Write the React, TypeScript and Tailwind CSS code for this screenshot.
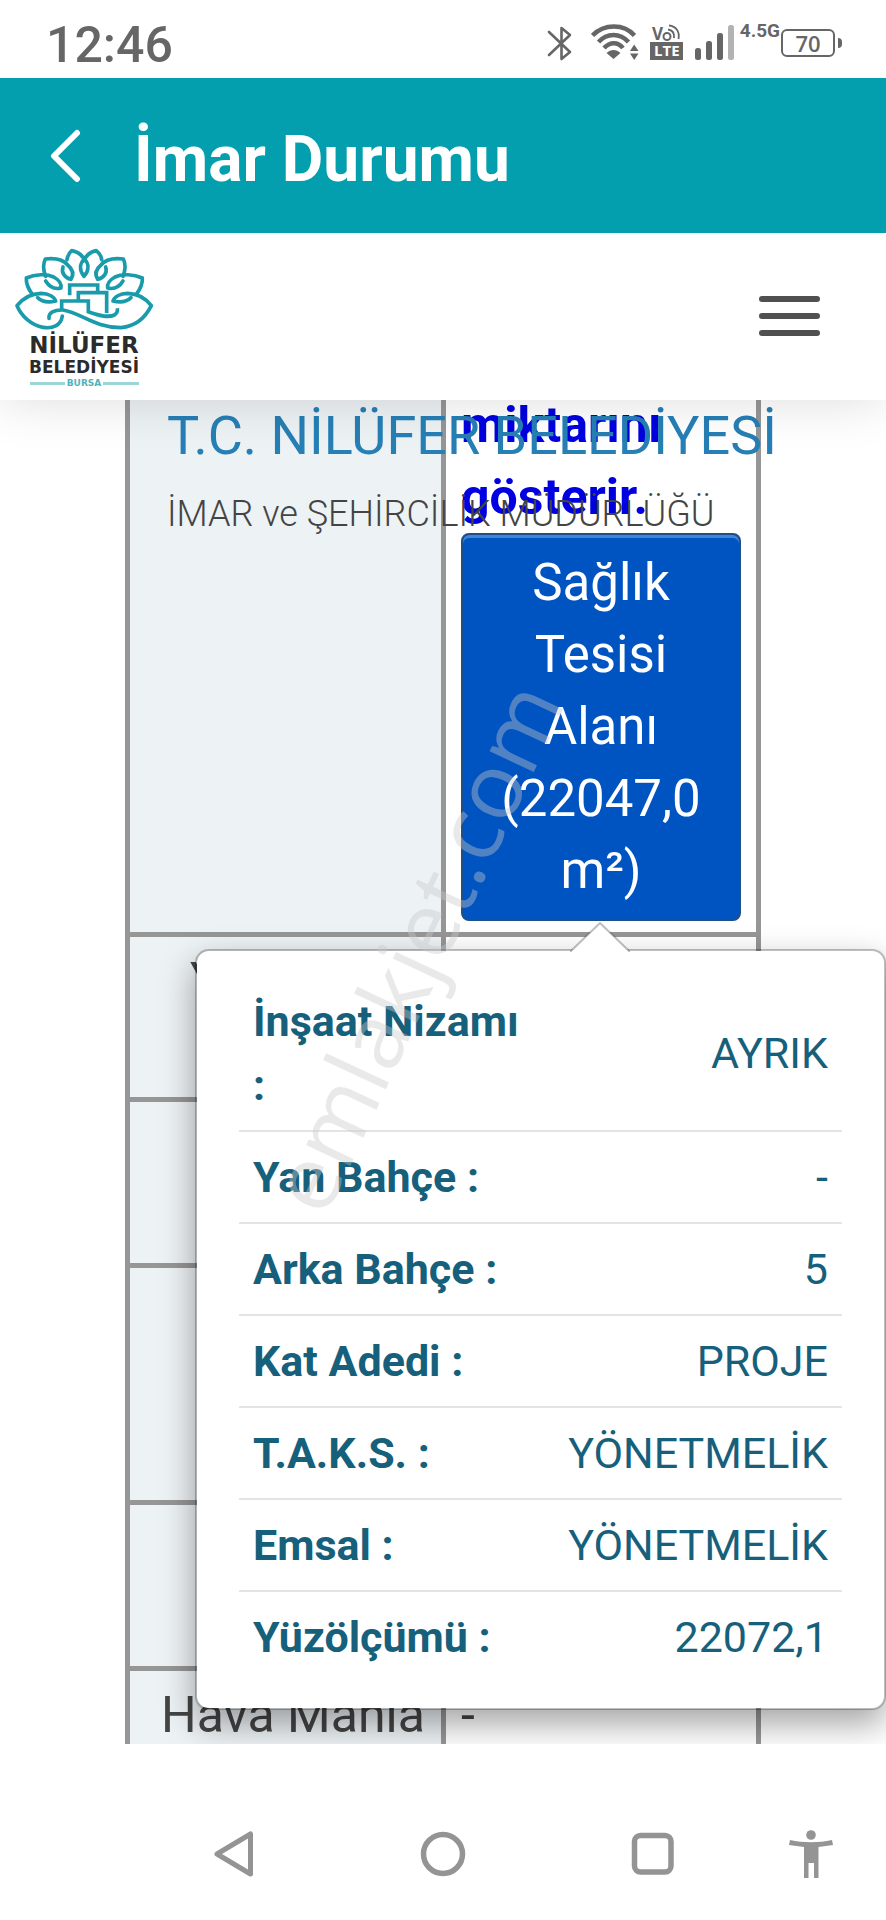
const details = [
  { label: 'İnşaat Nizamı :', value: 'AYRIK' },
  { label: 'Yan Bahçe :', value: '-' },
  { label: 'Arka Bahçe :', value: '5' },
  { label: 'Kat Adedi :', value: 'PROJE' },
  { label: 'T.A.K.S. :', value: 'YÖNETMELİK' },
  { label: 'Emsal :', value: 'YÖNETMELİK' },
  { label: 'Yüzölçümü :', value: '22072,1' },
];

function StatusBar() {
  return (
    <div className="flex h-[78px] shrink-0 items-start justify-between bg-white pl-[46px] pr-[44px] text-[#666]">
      <time className="pt-[15px] text-[50px] leading-[60px] font-medium">12:46</time>
      <div className="flex items-start pt-[20px]">
        <svg className="mt-[5px] h-9 w-[26px]" viewBox="0 0 26 36" fill="none" stroke="currentColor" strokeWidth="2.6" strokeLinejoin="round" strokeLinecap="round" aria-label="Bluetooth">
          <path d="M2 7L23 27L14.500 34V3L23 10L2 30" />
        </svg>
        <svg className="mt-[4px] ml-[18px] h-9 w-[48px]" viewBox="0 0 48 36" fill="none" stroke="currentColor" strokeWidth="4.5" aria-label="Wi-Fi">
          <path d="M1.500 11.500C13-0.500 33-0.500 43.500 11.500M7.500 18C16 8.500 29 8.500 37.500 18M13 24C19 17.500 27 17.500 32 24" />
          <path d="M15.500 29C20 25 25 25 29.500 29L22.500 35Z" fill="currentColor" stroke="none" />
          <path d="M39 27H47.500L43.200 20.500ZM39 29.500H47.500L43.200 36Z" fill="currentColor" stroke="none" />
        </svg>
        <svg className="mt-[4px] ml-[11px] h-[36px] w-[34px] overflow-visible" viewBox="0 0 34 36" aria-label="VoLTE">
          <text x="2" y="16" className="fill-[#666] font-['Open_Sans'] text-[17px] font-bold">V</text>
          <circle cx="17" cy="12.500" r="3.500" fill="none" stroke="#666" strokeWidth="2" />
          <path d="M18 5.500C22 6 24.500 9 24 14M19 1.500C26 2 30 8 28.500 15" fill="none" stroke="#666" strokeWidth="1.800" />
          <rect y="18" width="33" height="18" fill="#666" />
          <text x="4" y="32" className="fill-white font-['Open_Sans'] text-[15px] font-bold">LTE</text>
        </svg>
        <svg className="mt-[4px] ml-[11px] h-9 w-[40px]" viewBox="0 0 40 36" aria-label="Sinyal">
          <rect x="0" y="24" width="6" height="12" rx="2.500" fill="#666" />
          <rect x="11" y="17" width="6" height="19" rx="2.500" fill="#666" />
          <rect x="22" y="9" width="6" height="27" rx="2.500" fill="#666" />
          <rect x="33" y="1" width="6" height="35" rx="2.500" fill="#b3b3b3" />
        </svg>
        <span className="ml-[5px] text-[19px] leading-[22px] font-bold">4.5G</span>
        <div className="mt-[9px] ml-[1px] flex h-[28px] w-[54px] items-center justify-center rounded-[6px] border-[2px] border-[#666] font-['Open_Sans'] text-[22px] leading-6 font-semibold">
          70
        </div>
        <span className="mt-[18px] ml-[3px] h-[10px] w-[4px] rounded-r-full bg-[#666]" />
      </div>
    </div>
  );
}

function Logo() {
  return (
    <a href="#" className="flex w-[140px] flex-col items-center font-['DejaVu_Sans'] font-bold text-[#2b2b2b]">
      <svg className="h-[84px] w-[140px]" viewBox="43 50 420 252" fill="none" stroke="#1a9bab" strokeWidth="11" strokeLinejoin="round" strokeLinecap="round">
        <path d="M253 138C238 120 240 100 254 86C268 100 269 120 253 138Z" />
        <path d="M202 88C204 76 208 68 216 61C232 64 246 73 254 86C262 73 276 64 290 61C300 68 304 76 306 88" />
        <path d="M138 138C130 118 130 100 137 86C164 83 190 86 204 104C221 118 222 134 214 147C196 143 184 128 190 110" />
        <path d="M370 138C378 118 378 100 371 86C344 83 318 86 304 104C287 118 286 134 294 147C312 143 324 128 318 110" />
        <path d="M98 192C86 176 79 160 80 143C106 131 142 130 162 140C180 150 186 162 184 173C164 178 148 168 138 152" />
        <path d="M410 192C422 176 429 160 428 143C402 131 366 130 346 140C328 150 322 162 324 173C344 178 360 168 370 152" />
        <path d="M188 257C184 286 158 296 130 291C94 284 66 258 52 226C70 203 94 190 124 189C148 190 164 200 168 212C144 218 124 212 114 202" />
        <path d="M148 264C146 246 164 238 190 239C246 248 284 292 364 292C408 288 438 260 455 226C438 203 414 190 384 189C360 190 344 200 340 212C364 218 384 212 394 202" />
        <g strokeLinejoin="miter" strokeLinecap="butt">
          <path d="M210 195V164H294V183M236 210V187H321V248" />
          <path d="M186 236V212H266V244C294 254 324 264 344 254C352 250 354 242 353 234" />
        </g>
      </svg>
      <span className="mt-[1px] text-[23px] leading-[26px]">NİLÜFER</span>
      <span className="text-[17px] leading-[18px]">BELEDİYESİ</span>
      <span className="flex w-[109px] items-center gap-[2px] text-[9px] leading-[14px] text-[#4fb3bd]">
        <span className="h-[3px] flex-1 bg-[#9dd5d6]" />
        BURSA
        <span className="h-[3px] flex-1 bg-[#9dd5d6]" />
      </span>
    </a>
  );
}

function DetailsPopover() {
  return (
    <div role="dialog" aria-label="Yapılaşma bilgileri" className="absolute top-[549px] right-0 left-[195px] rounded-[14px] border-2 border-black/25 bg-white bg-clip-padding pt-[25px] pr-[42px] pb-[26px] pl-[42px] shadow-[0_14px_34px_rgba(0,0,0,0.36)]">
      <svg className="absolute top-[-29px] left-[373px] h-[30px] w-[60px]" viewBox="0 0 60 30">
        <path d="M0 30L30 1L60 30Z" fill="white" />
        <path d="M0 30L30 1L60 30" fill="none" stroke="black" strokeOpacity="0.25" strokeWidth="2" />
      </svg>
      <table className="w-full table-fixed text-[43px] leading-[64px] text-[#16607c]">
        <tbody>
          {details.map((row) => (
            <tr key={row.label} className="border-b-2 border-[#e4e4e4] last:border-b-0">
              <th scope="row" className="py-[13px] pr-[14px] pl-[14px] text-left font-bold">{row.label}</th>
              <td className="py-[13px] pr-[14px] text-right">{row.value}</td>
            </tr>
          ))}
        </tbody>
      </table>
    </div>
  );
}

export default function App() {
  return (
    <div className="flex h-screen flex-col overflow-hidden bg-white font-['Roboto',sans-serif]">
      <StatusBar />
      <header className="relative z-20 flex h-[155px] shrink-0 items-center bg-[#039fae] pl-[50px] text-white">
        <button type="button" aria-label="Geri" className="h-[54px] w-[32px]">
          <svg className="h-full w-full" viewBox="0 0 32 54" fill="none" stroke="currentColor" strokeWidth="6" strokeLinecap="round" strokeLinejoin="round">
            <path d="M27 4L4 27L27 50" />
          </svg>
        </button>
        <h1 className="ml-[52px] pt-[8px] text-[64px] leading-[76px] font-bold">İmar Durumu</h1>
      </header>
      <div className="relative z-10 flex h-[167px] shrink-0 items-start justify-between bg-white pt-[14px] pr-[66px] pl-[14px] shadow-[0_0_50px_rgba(0,0,0,0.14)]">
        <Logo />
        <button type="button" aria-label="Menü" className="mt-[49px] flex w-[61px] flex-col gap-[11px]">
          <span className="h-[6px] rounded-full bg-[#505050]" />
          <span className="h-[6px] rounded-full bg-[#505050]" />
          <span className="h-[6px] rounded-full bg-[#505050]" />
        </button>
      </div>

      <main className="relative min-h-0 flex-1 overflow-hidden">
        <div className="-mt-[24px] px-[125px]">
          <table className="w-full table-fixed border-collapse text-[50px] leading-[72px] text-[#444] [&_td]:border-[5px] [&_td]:border-[#969696] [&_th]:border-[5px] [&_th]:border-[#969696] [&_th]:bg-[#edf2f5] [&_th]:font-normal">
            <colgroup>
              <col className="w-[316px]" />
              <col />
            </colgroup>
            <tbody>
              <tr className="align-top">
                <th />
                <td className="px-[15px] pt-[8px] pb-[11px]">
                  <p className="font-bold text-[#0000e0]">miktarını gösterir.</p>
                  <button type="button" className="w-full rounded-[8px] border-2 border-[#1f4f87] bg-[#0054c1] px-[20px] pt-[12px] pb-[12px] text-center text-[51px] text-white shadow-[inset_0_3px_0_#4285d8]">
                    Sağlık Tesisi Alanı (22047,0 m²)
                  </button>
                </td>
              </tr>
              <tr className="h-[165px] align-top">
                <th className="py-[8px] pl-[60px] text-left">Y</th>
                <td />
              </tr>
              <tr className="h-[166px]">
                <th />
                <td />
              </tr>
              <tr className="h-[237px]">
                <th />
                <td />
              </tr>
              <tr className="h-[166px]">
                <th />
                <td />
              </tr>
              <tr className="h-[165px] align-top">
                <th className="py-[8px] pl-[15px] text-center">Hava Mania</th>
                <td className="px-[15px] py-[8px]">-</td>
              </tr>
            </tbody>
          </table>
        </div>

        <div className="absolute top-0 left-[167px] whitespace-nowrap">
          <h2 className="text-[54px] leading-[72px] text-[#267fb5]">T.C. NİLÜFER BELEDİYESİ</h2>
          <p className="mt-[6px] text-[36px] leading-[72px] font-light text-[#444]">İMAR ve ŞEHİRCİLİK MÜDÜRLÜĞÜ</p>
        </div>

        <DetailsPopover />

        <span className="pointer-events-none absolute top-[486px] left-[124px] w-[580px] rotate-[-65deg] text-center font-['Open_Sans'] text-[91px] leading-[120px] text-[#c8c8c8]/40">
          emlakjet.com
        </span>
      </main>

      <nav aria-label="Sistem" className="flex h-[176px] shrink-0 items-start justify-end bg-white pt-[86px] pr-[51px] text-[#949494]">
        <div className="flex gap-[162px]">
          <button type="button" aria-label="Geri" className="size-[48px]">
            <svg viewBox="0 0 48 48" fill="none" stroke="currentColor" strokeWidth="5" strokeLinejoin="round">
              <path d="M41.500 4V44L8 24Z" />
            </svg>
          </button>
          <button type="button" aria-label="Ana ekran" className="size-[48px]">
            <svg viewBox="0 0 48 48" fill="none" stroke="currentColor" strokeWidth="5.500">
              <circle cx="24" cy="24" r="19.500" />
            </svg>
          </button>
          <button type="button" aria-label="Son uygulamalar" className="size-[48px]">
            <svg viewBox="0 0 48 48" fill="none" stroke="currentColor" strokeWidth="5.500">
              <rect x="5.500" y="5.500" width="36.500" height="36.500" rx="6" />
            </svg>
          </button>
        </div>
        <button type="button" aria-label="Erişilebilirlik" className="ml-[110px] size-[48px]">
          <svg viewBox="0 0 48 48" fill="currentColor">
            <circle cx="24" cy="5" r="4.800" />
            <path d="M3 10C16 13 32 13 45 10L46 15L31.500 17V48H27V33H21.500V48H17V17L2 15Z" />
          </svg>
        </button>
      </nav>
    </div>
  );
}
